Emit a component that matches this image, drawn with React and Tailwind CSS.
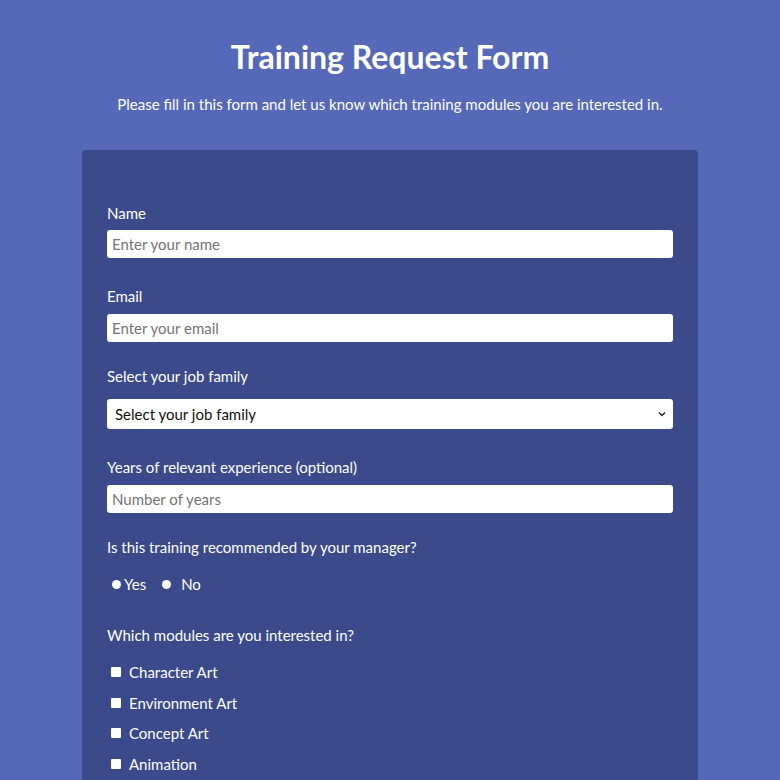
import React from "react";

const modules = ["Character Art", "Environment Art", "Concept Art", "Animation"];

function Label({ children, className = "" }) {
  return <label className={`block text-[15px] leading-6 ${className}`}>{children}</label>;
}

export default function App() {
  return (
    <div className="min-h-screen bg-[#5669b8] text-white font-['Lato','Noto_Sans',sans-serif] pt-[39px]">
      <h1 className="text-center text-[32px] leading-9 font-bold">Training Request Form</h1>
      <p className="mt-[17px] text-center text-[15px] leading-6">
        Please fill in this form and let us know which training modules you are interested in.
      </p>

      <form className="mx-auto mt-[34px] w-[616px] rounded bg-[#3b4a8a] px-[25px] pt-[51px] pb-10">
        <Label>Name</Label>
        <input
          type="text"
          placeholder="Enter your name"
          className="mt-[5px] block h-7 w-full rounded-[3px] bg-white px-[5px] text-[15px] text-black placeholder:text-[#757575] outline-none"
        />

        <Label className="mt-[26px]">Email</Label>
        <input
          type="email"
          placeholder="Enter your email"
          className="mt-[6px] block h-7 w-full rounded-[3px] bg-white px-[5px] text-[15px] text-black placeholder:text-[#757575] outline-none"
        />

        <Label className="mt-[22px]">Select your job family</Label>
        <div className="relative mt-[11px]">
          <select className="block h-[30px] w-full appearance-none rounded-[3px] bg-white pl-2 text-[15px] text-[#111] outline-none">
            <option>Select your job family</option>
          </select>
          <svg
            className="pointer-events-none absolute right-[7px] top-[12px]"
            width="8"
            height="6"
            viewBox="0 0 8 6"
            fill="none"
            stroke="#222"
            strokeWidth="1.4"
          >
            <path d="M1 1.5l3 3 3-3" />
          </svg>
        </div>

        <Label className="mt-[26px]">Years of relevant experience (optional)</Label>
        <input
          type="number"
          placeholder="Number of years"
          className="mt-[6px] block h-7 w-full rounded-[3px] bg-white px-[5px] text-[15px] text-black placeholder:text-[#757575] outline-none"
        />

        <Label className="mt-[22px]">Is this training recommended by your manager?</Label>
        <div className="mt-[13px] flex items-center pl-[5px] text-[15px] leading-6">
          <span className="h-[9px] w-[9px] rounded-full bg-white" />
          <span className="ml-[3px]">Yes</span>
          <span className="ml-[16px] h-[9px] w-[9px] rounded-full bg-white" />
          <span className="ml-[10px]">No</span>
        </div>

        <Label className="mt-[27px]">Which modules are you interested in?</Label>
        <div className="mt-[13px] flex flex-col gap-[6.5px]">
          {modules.map((m) => (
            <div key={m} className="flex items-center text-[15px] leading-6">
              <span className="ml-[4px] h-[10px] w-[10px] rounded-[1px] bg-white" />
              <span className="ml-[8px]">{m}</span>
            </div>
          ))}
        </div>
      </form>
    </div>
  );
}
